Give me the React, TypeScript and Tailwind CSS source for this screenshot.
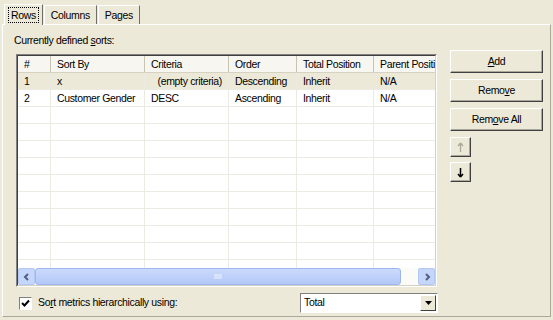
import React from "react";

/* Sort definitions dialog tab — classic Windows look */

const COLS = [
  { label: "#", w: 33 },
  { label: "Sort By", w: 94 },
  { label: "Criteria", w: 84 },
  { label: "Order", w: 68 },
  { label: "Total Position", w: 77 },
  { label: "Parent Position", w: 90 },
];

const ROWS = [
  ["1", "x", "(empty criteria)", "Descending", "Inherit", "N/A"],
  ["2", "Customer Gender", "DESC", "Ascending", "Inherit", "N/A"],
];

const EMPTY_ROWS = 10;

function ClassicButton({ children, className = "" }: { children: React.ReactNode; className?: string }) {
  return (
    <button
      className={`flex items-center justify-center bg-[#ece9d8] border border-t-white border-l-white border-r-[#404040] border-b-[#404040] shadow-[inset_-1px_-1px_0_#aca899] text-black ${className}`}
    >
      {children}
    </button>
  );
}

function Tab({ label, active }: { label: string; active?: boolean }) {
  return (
    <div
      className={`flex items-center px-[4px] border-t border-l border-white border-r border-r-[#716f64] ${
        active ? "h-[21px] -mb-px bg-[#ece9d8] relative z-10" : "h-[19px] mt-[2px] ml-[1px]"
      }`}
    >
      <span className={active ? "px-[2px] outline outline-1 outline-dotted outline-black leading-[14px]" : "px-[2px] leading-[14px]"}>
        {label}
      </span>
    </div>
  );
}

export default function App() {
  return (
    <div
      className="w-[553px] h-[320px] bg-[#ece9d8] text-[10.5px] tracking-[-0.35px] text-black overflow-hidden flex flex-col"
      style={{ fontFamily: '"Liberation Sans", Arial, sans-serif' }}
    >
      {/* Tab strip */}
      <div className="flex items-end pl-[4px] pt-[2px] h-[24px]">
        <Tab label="Rows" active />
        <Tab label="Columns" />
        <Tab label="Pages" />
      </div>

      {/* Tab panel */}
      <div className="flex-1 mx-[2px] mb-[3px] border-t border-l border-white border-r border-b border-r-[#aca899] border-b-[#aca899] flex flex-col">
        <div className="pl-[11px] pt-[8px] h-[29px]">
          Currently defined <u>s</u>orts:
        </div>

        <div className="flex gap-[13px] pl-[13px]">
          {/* List view */}
          <div className="w-[421px] h-[233px] border border-t-[#808080] border-l-[#808080] border-r-white border-b-white">
            <div className="w-full h-full border border-t-[#404040] border-l-[#404040] border-r-[#d4d0c8] border-b-[#d4d0c8] bg-white flex flex-col overflow-hidden">
              <div className="flex-1 overflow-hidden">
                <div className="w-[446px]">
                  {/* Header */}
                  <div className="flex h-[17px] bg-[#f7f6f0] border-b border-[#d6d2c2]">
                    {COLS.map((c) => (
                      <div
                        key={c.label}
                        style={{ width: c.w }}
                        className="shrink-0 px-[6px] leading-[16px] whitespace-nowrap overflow-hidden border-r border-[#c7c5b2]"
                      >
                        {c.label}
                      </div>
                    ))}
                  </div>
                  {/* Data rows */}
                  {ROWS.map((r, i) => (
                    <div
                      key={i}
                      className={`flex h-[17px] border-b border-[#ebeae3] ${i === 0 ? "bg-[#ece9d8]" : "bg-white"}`}
                    >
                      {r.map((cell, j) => (
                        <div
                          key={j}
                          style={{ width: COLS[j].w }}
                          className={`shrink-0 px-[6px] leading-[16px] whitespace-nowrap overflow-hidden border-r border-[#ebeae3] ${
                            j === 2 && i === 0 ? "text-right" : ""
                          }`}
                        >
                          {cell}
                        </div>
                      ))}
                    </div>
                  ))}
                  {Array.from({ length: EMPTY_ROWS }).map((_, i) => (
                    <div key={i} className="flex h-[17px] border-b border-[#ebeae3]">
                      {COLS.map((c) => (
                        <div key={c.label} style={{ width: c.w }} className="shrink-0 border-r border-[#ebeae3]" />
                      ))}
                    </div>
                  ))}
                </div>
              </div>

              {/* Horizontal scrollbar */}
              <div className="h-[17px] flex bg-[#fbfbf8] shrink-0">
                <div className="w-[17px] h-[17px] rounded-[2px] bg-[#c6d6fb] border border-[#b4c8f6] flex items-center justify-center">
                  <svg width="8" height="8" viewBox="0 0 8 8">
                    <path d="M5 1 L2 4 L5 7" stroke="#4d6185" strokeWidth="2" fill="none" />
                  </svg>
                </div>
                <div className="w-[366px] h-[17px] rounded-[3px] bg-gradient-to-b from-[#cbdafc] to-[#b3c8f7] border border-[#9eb6ee] flex items-center justify-center">
                  <svg width="8" height="7" viewBox="0 0 8 7">
                    <path d="M1 1v5M3 1v5M5 1v5M7 1v5" stroke="#eef3fe" strokeWidth="1" />
                  </svg>
                </div>
                <div className="flex-1" />
                <div className="w-[17px] h-[17px] rounded-[2px] bg-[#c6d6fb] border border-[#b4c8f6] flex items-center justify-center">
                  <svg width="8" height="8" viewBox="0 0 8 8">
                    <path d="M3 1 L6 4 L3 7" stroke="#4d6185" strokeWidth="2" fill="none" />
                  </svg>
                </div>
              </div>
            </div>
          </div>

          {/* Buttons */}
          <div className="flex flex-col -mt-[4px]">
            <ClassicButton className="w-[93px] h-[23px]">
              <u>A</u>dd
            </ClassicButton>
            <ClassicButton className="w-[93px] h-[23px] mt-[6px]">
              Remo<u>v</u>e
            </ClassicButton>
            <ClassicButton className="w-[93px] h-[23px] mt-[6px]">
              Rem<u>o</u>ve All
            </ClassicButton>
            <ClassicButton className="w-[21px] h-[20px] mt-[6px]">
              <svg width="7" height="11" viewBox="0 0 7 11">
                <path d="M3.5 1 L1 4 M3.5 1 L6 4 M3.5 1 V10" stroke="#aca899" strokeWidth="1.3" fill="none" />
              </svg>
            </ClassicButton>
            <ClassicButton className="w-[21px] h-[20px] mt-[5px]">
              <svg width="7" height="11" viewBox="0 0 7 11">
                <path d="M3.5 1 V10 M3.5 10 L1 7 M3.5 10 L6 7" stroke="#000" strokeWidth="1.5" fill="none" />
              </svg>
            </ClassicButton>
          </div>
        </div>

        {/* Bottom row */}
        <div className="flex items-center mt-[6px] pl-[16px] w-[435px]">
          <div className="w-[13px] h-[13px] bg-white border border-t-[#808080] border-l-[#808080] border-r-white border-b-white flex items-center justify-center">
            <svg width="9" height="9" viewBox="0 0 9 9">
              <path d="M1 4 L3.5 6.5 L8 1.5" stroke="#000" strokeWidth="2" fill="none" />
            </svg>
          </div>
          <span className="ml-[6px]">
            So<u>r</u>t metrics hierarchically using:
          </span>
          <div className="ml-auto w-[138px] h-[20px] bg-white border border-t-[#808080] border-l-[#808080] border-r-white border-b-white flex items-center">
            <span className="flex-1 pl-[3px]">Total</span>
            <div className="w-[16px] h-[16px] mr-[1px] bg-[#ece9d8] border border-t-white border-l-white border-r-[#404040] border-b-[#404040] flex items-center justify-center">
              <svg width="7" height="4" viewBox="0 0 7 4">
                <path d="M0 0 H7 L3.5 4 Z" fill="#000" />
              </svg>
            </div>
          </div>
        </div>
      </div>
    </div>
  );
}
